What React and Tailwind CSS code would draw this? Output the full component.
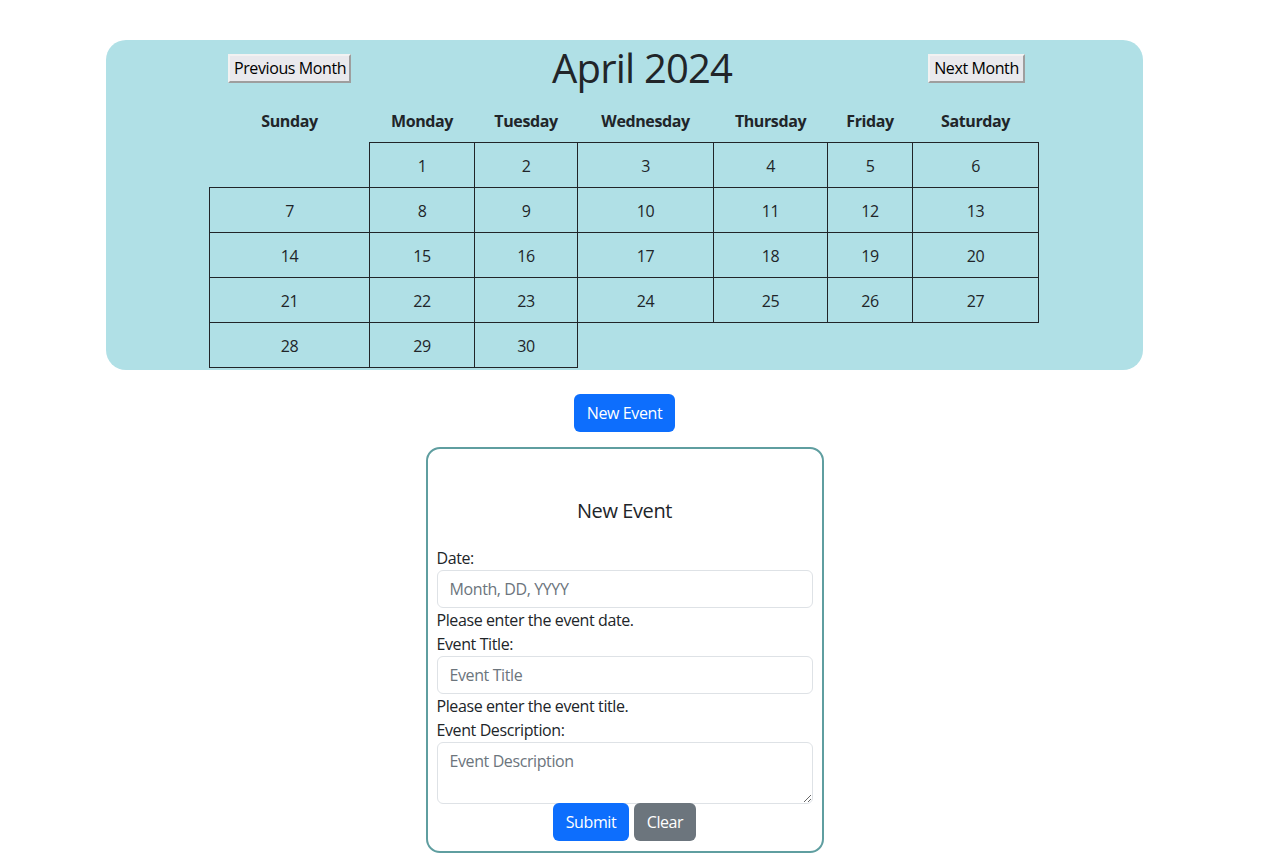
const weeks = [
  [null, 1, 2, 3, 4, 5, 6],
  [7, 8, 9, 10, 11, 12, 13],
  [14, 15, 16, 17, 18, 19, 20],
  [21, 22, 23, 24, 25, 26, 27],
  [28, 29, 30, null, null, null, null],
]

const days = ['Sunday', 'Monday', 'Tuesday', 'Wednesday', 'Thursday', 'Friday', 'Saturday']
const colWidths = ['w-[160px]', 'w-[105px]', 'w-[103px]', 'w-[136px]', 'w-[114px]', 'w-[85px]', 'w-[126px]']

function OldButton({ children, className = '' }) {
  return (
    <button
      className={`h-[29px] shrink-0 whitespace-nowrap border-2 border-t-[#f2f2f2] border-l-[#f2f2f2] border-r-[#9e9e9e] border-b-[#9e9e9e] bg-[#e9e9ed] px-[4px] text-[16px] leading-[21px] text-black ${className}`}
    >
      {children}
    </button>
  )
}

function Calendar() {
  return (
    <div className="mx-auto mt-[40px] w-[1037px] rounded-[20px] bg-[#b0e0e6] pb-[2px] pt-1">
      <div className="flex h-[48px] items-center pl-[122px]">
        <OldButton className="w-[123px]">Previous Month</OldButton>
        <h1 className="ml-[201px] w-[179px] whitespace-nowrap text-center text-[40px] font-normal leading-[48px] tracking-[-0.02em] text-[#212529]">
          April 2024
        </h1>
        <OldButton className="ml-[197px] w-[97px]">Next Month</OldButton>
      </div>

      <table className="ml-[103px] mt-2 w-[829px] table-fixed border-collapse text-[16px] text-[#212529]">
        <colgroup>
          {colWidths.map((w, i) => (
            <col key={i} className={w} />
          ))}
        </colgroup>
        <thead>
          <tr className="h-[42px]">
            {days.map((d) => (
              <th key={d} className="p-0 align-middle text-center font-bold">
                {d}
              </th>
            ))}
          </tr>
        </thead>
        <tbody>
          {weeks.map((week, wi) => (
            <tr key={wi} className="h-[45px]">
              {week.map((n, di) =>
                n ? (
                  <td key={di} className="border border-[#212529] p-0 pt-[2px] text-center">
                    {n}
                  </td>
                ) : (
                  <td key={di} className="p-0" />
                )
              )}
            </tr>
          ))}
        </tbody>
      </table>
    </div>
  )
}

function Field({ label, placeholder, hint }) {
  return (
    <>
      <label className="block leading-[24px]">{label}</label>
      <input
        placeholder={placeholder}
        className="block h-[38px] w-full rounded-[6px] border border-[#dee2e6] px-3 text-[16px] text-[#212529] placeholder:text-[#6c757d] focus:outline-none"
      />
      {hint && <div className="leading-[24px]">{hint}</div>}
    </>
  )
}

function EventForm() {
  return (
    <div className="mx-auto mt-[15px] w-[398px] rounded-[14px] border-2 border-[#5f9ea0] px-[9px] pb-[10px] pt-[50px] text-[16px] text-[#212529]">
      <h2 className="mb-[23px] text-center text-[20px] font-normal leading-[24px]">New Event</h2>
      <Field label="Date:" placeholder="Month, DD, YYYY" hint="Please enter the event date." />
      <Field label="Event Title:" placeholder="Event Title" hint="Please enter the event title." />
      <label className="block leading-[24px]">Event Description:</label>
      <textarea
        placeholder="Event Description"
        className="block h-[62px] w-full rounded-[6px] border border-[#dee2e6] px-3 py-[6px] text-[16px] leading-[24px] placeholder:text-[#6c757d] focus:outline-none"
      />
      <div className="-mt-[1px] flex justify-center gap-[5px]">
        <button className="h-[38px] w-[76px] rounded-[6px] bg-[#0d6efd] text-white">Submit</button>
        <button className="h-[38px] w-[62px] rounded-[6px] bg-[#6c757d] text-white">Clear</button>
      </div>
    </div>
  )
}

export default function App() {
  return (
    <div className="min-h-screen bg-white font-['Open_Sans',sans-serif] tracking-[-0.025em]">
      <div className="w-[1249px] pb-4">
        <Calendar />
        <div className="mt-6 flex justify-center">
          <button className="h-[38px] w-[101px] rounded-[6px] bg-[#0d6efd] text-[16px] text-white">New Event</button>
        </div>
        <EventForm />
      </div>
    </div>
  )
}
